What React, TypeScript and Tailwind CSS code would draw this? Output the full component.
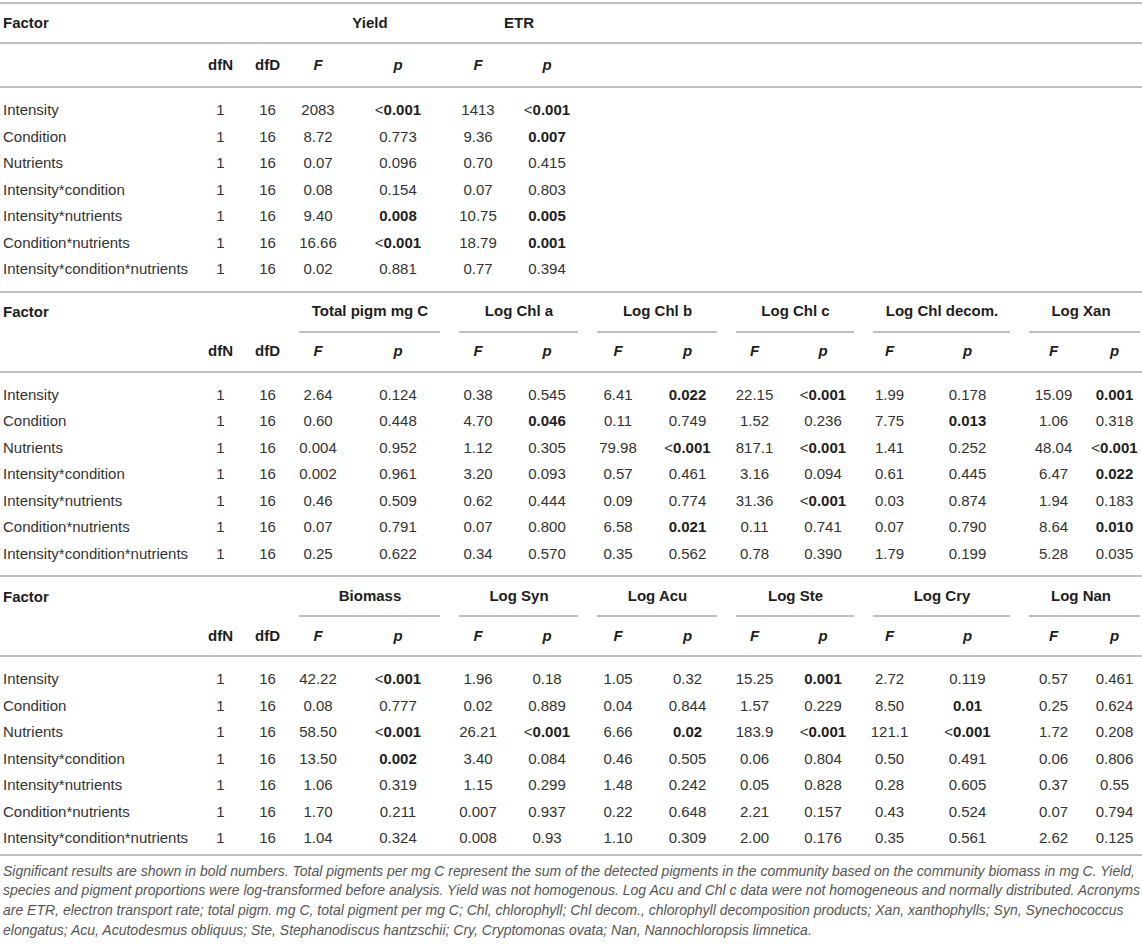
import React from "react";

const GRID =
  "grid grid-cols-[196px_49px_45px_56px_104px_56px_82px_60px_79px_55px_82px_51px_105px_67px_55px]";

type Row = string[];

function Val({ s }: { s: string }) {
  const bold = s.endsWith("!");
  const t = bold ? s.slice(0, -1) : s;
  if (!bold) return <span>{t}</span>;
  if (t.startsWith("<"))
    return (
      <span>
        <span>&lt;</span>
        <span className="font-bold text-[#1e1e1e]">{t.slice(1)}</span>
      </span>
    );
  return <span className="font-bold text-[#1e1e1e]">{t}</span>;
}

function Section({
  groups,
  rows,
  first,
  last,
}: {
  groups: string[];
  rows: Row[];
  first?: boolean;
  last?: boolean;
}) {
  return (
    <div className="border-t-2 border-[#bfbfbf]">
      <div
        className={`${GRID} ${first ? "h-[40px] border-b-2 border-[#bfbfbf]" : "h-[40px]"}`}
      >
        <div className="col-span-3 flex items-center pl-[3px] font-bold text-[#1e1e1e]">
          Factor
        </div>
        {groups.map((g, gi) => (
          <div key={g} className="col-span-2 flex flex-col">
            <div className="flex h-[38px] items-center justify-center font-bold text-[#1e1e1e]">
              {g}
            </div>
            {!first && (
              <div
                className={`h-[2px] ml-[9px] bg-[#bfbfbf] ${gi === groups.length - 1 ? "mr-[2px]" : "mr-[10px]"}`}
              />
            )}
          </div>
        ))}
      </div>
      <div
        className={`${GRID} ${first ? "h-[44px]" : "h-[40px]"} border-b-2 border-[#bfbfbf] font-bold text-[#1e1e1e]`}
      >
        <div />
        <div className="flex items-center justify-center">dfN</div>
        <div className="flex items-center justify-center">dfD</div>
        {groups.map((g) => (
          <React.Fragment key={g}>
            <div className="flex items-center justify-center italic">F</div>
            <div className="flex items-center justify-center italic">p</div>
          </React.Fragment>
        ))}
      </div>
      <div className={`pt-[9px] ${last ? "pb-[2px]" : "pb-[8px]"}`}>
        {rows.map((r) => (
          <div key={r[0]} className={`${GRID} h-[26.5px]`}>
            <div className="flex items-center pl-[3px] whitespace-nowrap">{r[0]}</div>
            <div className="flex items-center justify-center">1</div>
            <div className="flex items-center justify-center">16</div>
            {r.slice(1).map((v, i) => (
              <div key={i} className="flex items-center justify-center whitespace-nowrap">
                <Val s={v} />
              </div>
            ))}
          </div>
        ))}
      </div>
    </div>
  );
}

const S1: Row[] = [
  ["Intensity", "2083", "<0.001!", "1413", "<0.001!"],
  ["Condition", "8.72", "0.773", "9.36", "0.007!"],
  ["Nutrients", "0.07", "0.096", "0.70", "0.415"],
  ["Intensity*condition", "0.08", "0.154", "0.07", "0.803"],
  ["Intensity*nutrients", "9.40", "0.008!", "10.75", "0.005!"],
  ["Condition*nutrients", "16.66", "<0.001!", "18.79", "0.001!"],
  ["Intensity*condition*nutrients", "0.02", "0.881", "0.77", "0.394"],
];

const S2: Row[] = [
  ["Intensity", "2.64", "0.124", "0.38", "0.545", "6.41", "0.022!", "22.15", "<0.001!", "1.99", "0.178", "15.09", "0.001!"],
  ["Condition", "0.60", "0.448", "4.70", "0.046!", "0.11", "0.749", "1.52", "0.236", "7.75", "0.013!", "1.06", "0.318"],
  ["Nutrients", "0.004", "0.952", "1.12", "0.305", "79.98", "<0.001!", "817.1", "<0.001!", "1.41", "0.252", "48.04", "<0.001!"],
  ["Intensity*condition", "0.002", "0.961", "3.20", "0.093", "0.57", "0.461", "3.16", "0.094", "0.61", "0.445", "6.47", "0.022!"],
  ["Intensity*nutrients", "0.46", "0.509", "0.62", "0.444", "0.09", "0.774", "31.36", "<0.001!", "0.03", "0.874", "1.94", "0.183"],
  ["Condition*nutrients", "0.07", "0.791", "0.07", "0.800", "6.58", "0.021!", "0.11", "0.741", "0.07", "0.790", "8.64", "0.010!"],
  ["Intensity*condition*nutrients", "0.25", "0.622", "0.34", "0.570", "0.35", "0.562", "0.78", "0.390", "1.79", "0.199", "5.28", "0.035"],
];

const S3: Row[] = [
  ["Intensity", "42.22", "<0.001!", "1.96", "0.18", "1.05", "0.32", "15.25", "0.001!", "2.72", "0.119", "0.57", "0.461"],
  ["Condition", "0.08", "0.777", "0.02", "0.889", "0.04", "0.844", "1.57", "0.229", "8.50", "0.01!", "0.25", "0.624"],
  ["Nutrients", "58.50", "<0.001!", "26.21", "<0.001!", "6.66", "0.02!", "183.9", "<0.001!", "121.1", "<0.001!", "1.72", "0.208"],
  ["Intensity*condition", "13.50", "0.002!", "3.40", "0.084", "0.46", "0.505", "0.06", "0.804", "0.50", "0.491", "0.06", "0.806"],
  ["Intensity*nutrients", "1.06", "0.319", "1.15", "0.299", "1.48", "0.242", "0.05", "0.828", "0.28", "0.605", "0.37", "0.55"],
  ["Condition*nutrients", "1.70", "0.211", "0.007", "0.937", "0.22", "0.648", "2.21", "0.157", "0.43", "0.524", "0.07", "0.794"],
  ["Intensity*condition*nutrients", "1.04", "0.324", "0.008", "0.93", "1.10", "0.309", "2.00", "0.176", "0.35", "0.561", "2.62", "0.125"],
];

const NOTE = [
  "Significant results are shown in bold numbers. Total pigments per mg C represent the sum of the detected pigments in the community based on the community biomass in mg C. Yield,",
  "species and pigment proportions were log-transformed before analysis. Yield was not homogenous. Log Acu and Chl c data were not homogeneous and normally distributed. Acronyms",
  "are ETR, electron transport rate; total pigm. mg C, total pigment per mg C; Chl, chlorophyll; Chl decom., chlorophyll decomposition products; Xan, xanthophylls; Syn, Synechococcus",
  "elongatus; Acu, Acutodesmus obliquus; Ste, Stephanodiscus hantzschii; Cry, Cryptomonas ovata; Nan, Nannochloropsis limnetica.",
];

export default function App() {
  return (
    <div className="w-[1142px] h-[946px] overflow-hidden bg-white pt-[2px] font-['Liberation_Sans',Arial,sans-serif] text-[15px] text-[#333]">
      <Section groups={["Yield", "ETR"]} rows={S1} first />
      <Section
        groups={["Total pigm mg C", "Log Chl a", "Log Chl b", "Log Chl c", "Log Chl decom.", "Log Xan"]}
        rows={S2}
      />
      <Section
        groups={["Biomass", "Log Syn", "Log Acu", "Log Ste", "Log Cry", "Log Nan"]}
        rows={S3}
        last
      />
      <div className="border-t-2 border-[#bfbfbf] pt-[6px] pl-[3px] italic text-[14px] leading-[19.7px] text-[#555]">
        {NOTE.map((l) => (
          <div key={l} className="whitespace-nowrap">
            {l}
          </div>
        ))}
      </div>
    </div>
  );
}
